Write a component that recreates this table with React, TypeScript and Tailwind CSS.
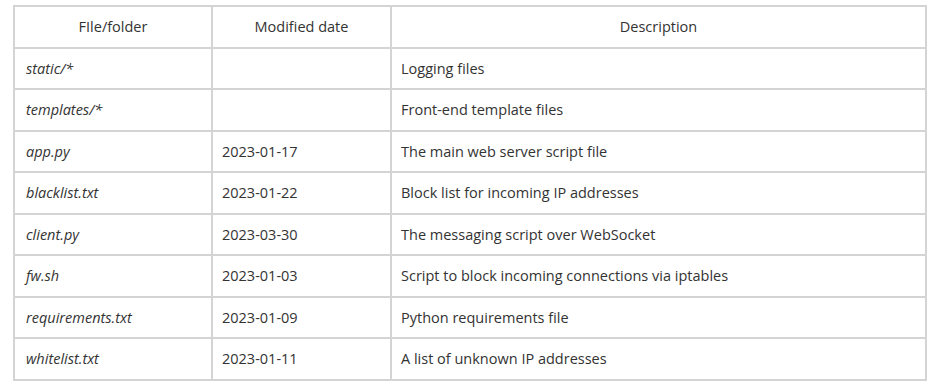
const rows = [
  { file: "static/*", date: "", desc: "Logging files" },
  { file: "templates/*", date: "", desc: "Front-end template files" },
  { file: "app.py", date: "2023-01-17", desc: "The main web server script file" },
  { file: "blacklist.txt", date: "2023-01-22", desc: "Block list for incoming IP addresses" },
  { file: "client.py", date: "2023-03-30", desc: "The messaging script over WebSocket" },
  { file: "fw.sh", date: "2023-01-03", desc: "Script to block incoming connections via iptables" },
  { file: "requirements.txt", date: "2023-01-09", desc: "Python requirements file" },
  { file: "whitelist.txt", date: "2023-01-11", desc: "A list of unknown IP addresses" },
];

export default function App() {
  return (
    <div className="w-[936px] h-[386px] bg-white pt-[5px] pl-[13px] font-['Open_Sans',sans-serif] text-[14.5px] text-[#333]">
      <table className="w-[914px] border-collapse table-fixed">
        <colgroup>
          <col className="w-[198px]" />
          <col className="w-[179px]" />
          <col />
        </colgroup>
        <thead>
          <tr className="h-[41.5px]">
            <th className="border-2 border-[#d4d4d4] font-normal text-center px-[10px] pt-[1px]">FIle/folder</th>
            <th className="border-2 border-[#d4d4d4] font-normal text-center px-[10px] pt-[1px]">Modified date</th>
            <th className="border-2 border-[#d4d4d4] font-normal text-center px-[10px] pt-[1px]">Description</th>
          </tr>
        </thead>
        <tbody>
          {rows.map((row) => (
            <tr key={row.file} className="h-[41.5px]">
              <td className="border-2 border-[#d4d4d4] px-[11px] pt-[1px] italic">{row.file}</td>
              <td className="border-2 border-[#d4d4d4] px-[9px] pt-[1px]">{row.date}</td>
              <td className="border-2 border-[#d4d4d4] px-[9px] pt-[1px]">{row.desc}</td>
            </tr>
          ))}
        </tbody>
      </table>
    </div>
  );
}
